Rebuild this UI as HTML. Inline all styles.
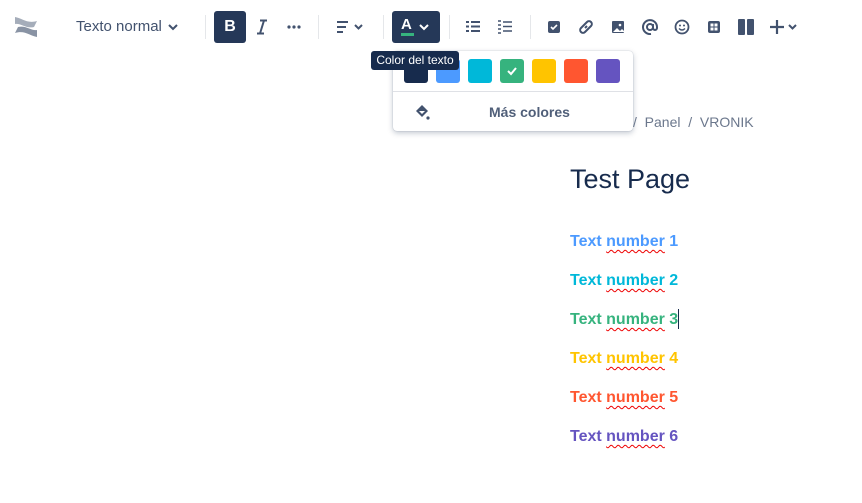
<!DOCTYPE html>
<html><head><meta charset="utf-8"><style>
body{margin:0;width:862px;height:503px;background:#fff;font-family:"Liberation Sans",sans-serif;position:relative;overflow:hidden;color:#172B4D}
.a{position:absolute}
.sep{position:absolute;top:15px;width:1px;height:24px;background:#e5e7ea}
.ic{position:absolute;top:17px}
.sw{position:absolute;top:59px;width:24px;height:24px;border-radius:3px}
.t{position:absolute;left:570px;font-weight:bold;font-size:16px;line-height:18px}
.t u{text-decoration:underline wavy #e00;text-decoration-thickness:1px;text-underline-offset:3px}
</style></head><body>
<svg class="a" style="left:13px;top:14px" width="26" height="26" viewBox="0 0 26 26"><path d="M2 3c7 1 12 7 22 4l-3 6c-8 2-13-4-19-3z" fill="#a5adba"/><path d="M24 23c-7-1-12-7-22-4l3-6c8-2 13 4 19 3z" fill="#8993a4"/></svg>
<div class="a" style="left:76px;top:18px;font-size:15px;color:#42526E">Texto normal</div>
<svg class="ic" style="left:167px;top:21px" width="12" height="12"><path d="M2 4l4 4 4-4" stroke="#42526E" stroke-width="2" fill="none"/></svg>
<div class="sep" style="left:205px"></div>
<div class="a" style="left:214px;top:11px;width:32px;height:32px;background:#253858;border-radius:3px;color:#fff;font-weight:bold;font-size:16px;text-align:center;line-height:32px">B</div>
<svg class="a" style="left:255px;top:19px" width="14" height="16"><path d="M5 1.5h7M2 14.5h7M9 1.5l-4 13" stroke="#42526E" stroke-width="2" fill="none"/></svg>
<svg class="a" style="left:287px;top:25px" width="14" height="4"><circle cx="2" cy="2" r="1.6" fill="#42526E"/><circle cx="7" cy="2" r="1.6" fill="#42526E"/><circle cx="12" cy="2" r="1.6" fill="#42526E"/></svg>
<div class="sep" style="left:318px"></div>
<svg class="ic" style="left:336px;top:20px" width="28" height="14"><path d="M1 2h11M1 7h9M1 12h6" stroke="#42526E" stroke-width="2"/><path d="M19 5l3.5 3.5L26 5" stroke="#42526E" stroke-width="2" fill="none"/></svg>
<div class="sep" style="left:383px"></div>
<div class="a" style="left:392px;top:11px;width:48px;height:32px;background:#253858;border-radius:3px"></div>
<div class="a" style="left:401px;top:16px;color:#fff;font-weight:bold;font-size:15px">A</div>
<div class="a" style="left:401px;top:33px;width:13px;height:3px;background:#36B37E"></div>
<svg class="a" style="left:418px;top:21px" width="12" height="12"><path d="M2 4l4 4 4-4" stroke="#fff" stroke-width="2" fill="none"/></svg>
<div class="sep" style="left:449px"></div>
<svg class="ic" style="left:466px;top:20px" width="14" height="13"><path d="M0 2h3M5 2h9M0 6.5h3M5 6.5h9M0 11h3M5 11h9" stroke="#42526E" stroke-width="2"/></svg>
<svg class="ic" style="left:498px;top:20px" width="14" height="14"><path d="M0 1h3M5 2h9M5 6.5h9M5 11h9M0 5h3M0 9h3M0 13h3" stroke="#42526E" stroke-width="1.6"/></svg>
<div class="sep" style="left:530px"></div>
<div class="a" style="left:548px;top:21px;width:12px;height:12px;background:#42526E;border-radius:2px"></div>
<svg class="a" style="left:548px;top:21px" width="12" height="12"><path d="M3 6l2 2 4-4" stroke="#fff" stroke-width="1.6" fill="none"/></svg>
<svg class="ic" style="left:578px;top:19px" width="16" height="16"><path d="M7 9l2-2M6 6l3-3a2.5 2.5 0 014 4l-3 3M10 10l-3 3a2.5 2.5 0 01-4-4l3-3" stroke="#42526E" stroke-width="2" fill="none"/></svg>
<svg class="ic" style="left:612px;top:21px" width="12" height="12"><rect width="12" height="12" rx="1" fill="#42526E"/><path d="M1 11l4-4 3 3 2-2 2 2v1z" fill="#fff"/><circle cx="8" cy="4" r="1.3" fill="#fff"/></svg>
<svg class="ic" style="left:642px;top:19px" width="16" height="16"><circle cx="8" cy="8" r="3" stroke="#42526E" stroke-width="2" fill="none"/><path d="M11 5v4a2 2 0 004 0V8A7 7 0 109 15" stroke="#42526E" stroke-width="2" fill="none"/></svg>
<svg class="ic" style="left:674px;top:19px" width="16" height="16"><circle cx="8" cy="8" r="6.5" stroke="#42526E" stroke-width="1.8" fill="none"/><circle cx="6" cy="6.5" r="1" fill="#42526E"/><circle cx="10" cy="6.5" r="1" fill="#42526E"/><path d="M5 9.5q3 3 6 0" stroke="#42526E" stroke-width="1.5" fill="none"/></svg>
<svg class="ic" style="left:708px;top:21px" width="12" height="12"><rect width="12" height="12" rx="2" fill="#42526E"/><path d="M2.5 2.5h3v3h-3zM6.5 2.5h3v3h-3zM2.5 6.5h3v3h-3zM6.5 6.5h3v3h-3z" fill="#fff"/></svg>
<svg class="ic" style="left:738px;top:19px" width="16" height="16"><rect x="0" y="0" width="7" height="16" rx="1" fill="#42526E"/><rect x="9" y="0" width="7" height="16" rx="1" fill="#42526E"/></svg>
<svg class="ic" style="left:770px;top:19px" width="30" height="16"><path d="M7 1v14M0 8h14" stroke="#42526E" stroke-width="2.2"/><path d="M19 6l3.5 3.5L26 6" stroke="#42526E" stroke-width="2" fill="none"/></svg>

<div class="a" style="left:393px;top:51px;width:240px;height:80px;background:#fff;border-radius:4px;box-shadow:0 2px 6px rgba(9,30,66,.25),0 0 1px rgba(9,30,66,.3)"></div>
<div class="sw" style="left:404px;background:#172B4D"></div>
<div class="sw" style="left:436px;background:#4C9AFF"></div>
<div class="sw" style="left:468px;background:#00B8D9"></div>
<div class="sw" style="left:500px;background:#36B37E"></div>
<svg class="a" style="left:504px;top:63px" width="16" height="16"><path d="M4 8l3 3 5-6" stroke="#fff" stroke-width="2" fill="none"/></svg>
<div class="sw" style="left:532px;background:#FFC400"></div>
<div class="sw" style="left:564px;background:#FF5630"></div>
<div class="sw" style="left:596px;background:#6554C0"></div>
<div class="a" style="left:393px;top:91px;width:240px;height:1px;background:#dfe1e6"></div>
<svg class="a" style="left:413px;top:103px" width="18" height="18"><path d="M3 8l6-6 6 6-6 6z" fill="#42526E"/><path d="M6 8h6l-3 3z" fill="#fff"/><circle cx="15" cy="15" r="1.6" fill="#42526E"/></svg>
<div class="a" style="left:489px;top:104px;font-size:14px;font-weight:bold;color:#505F79">Más colores</div>
<div class="a" style="left:371px;top:51px;width:88px;height:19px;background:#172B4D;border-radius:3px;color:#fff;font-size:12px;line-height:19px;text-align:center">Color del texto</div>

<div class="a" style="left:633px;top:114px;font-size:14px;color:#6B778C">/ &nbsp;Panel &nbsp;/ &nbsp;VRONIK</div>
<div class="a" style="left:570px;top:164px;font-size:27px;color:#172B4D">Test Page</div>
<div class="t" style="top:233px;color:#4C9AFF">Text <u>number</u> 1</div>
<div class="t" style="top:272px;color:#00B8D9">Text <u>number</u> 2</div>
<div class="t" style="top:311px;color:#36B37E">Text <u>number</u> 3</div>
<div class="a" style="left:678px;top:309px;width:1px;height:20px;background:#172B4D"></div>
<div class="t" style="top:350px;color:#FFC400">Text <u>number</u> 4</div>
<div class="t" style="top:389px;color:#FF5630">Text <u>number</u> 5</div>
<div class="t" style="top:428px;color:#6554C0">Text <u>number</u> 6</div>
</body></html>
